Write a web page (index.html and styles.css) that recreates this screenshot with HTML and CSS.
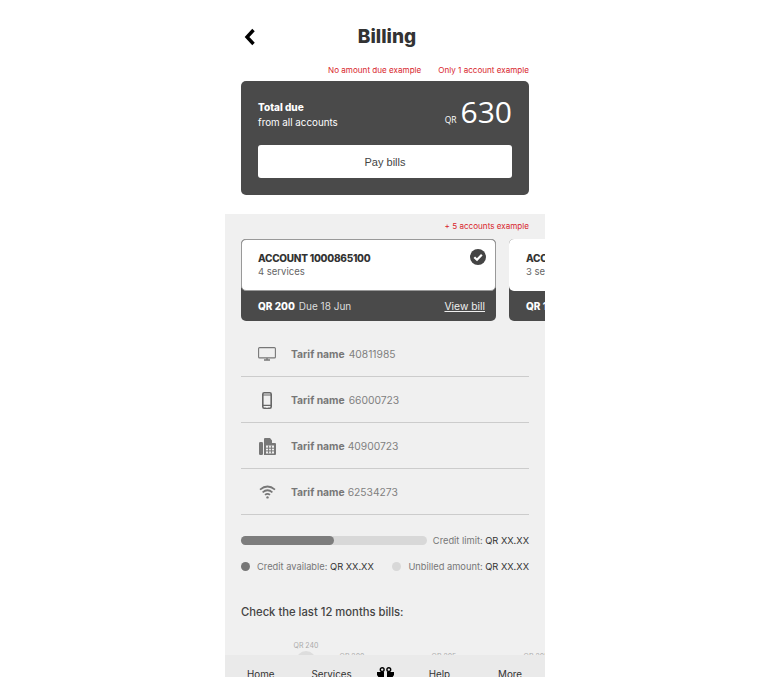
FILE: index.html
```html
<!DOCTYPE html>
<html lang="en">

<head>
    <meta charset="UTF-8">
    <meta name="viewport" content="width=device-width, initial-scale=1.0">
    <title>Billing</title>
    <link rel="stylesheet" href="styles.css">
</head>

<body>

    <div class="phone">
        <div class="top">
            <header class="title-row">
                <svg class="back" width="12" height="18" viewBox="0 0 12 18">
                    <path d="M9.5 2 L3 9 L9.5 16" fill="none" stroke="#000" stroke-width="3.4" />
                </svg>
                <h1>Billing</h1>
            </header>

            <div class="examples">
                <span>No amount due example</span>
                <span>Only 1 account example</span>
            </div>

            <section class="due-card">
                <div class="due-row">
                    <div class="due-text">
                        <strong>Total due</strong>
                        <span>from all accounts</span>
                    </div>
                    <div class="due-amount"><small>QR</small>630</div>
                </div>
                <button class="pay-btn">Pay bills</button>
            </section>
        </div>

        <div class="main">
            <div class="examples examples-single">
                <span>+ 5 accounts example</span>
            </div>

            <div class="accounts">
                <div class="account">
                    <div class="account-head selected">
                        <strong>ACCOUNT 1000865100</strong>
                        <span>4 services</span>
                        <svg class="check" width="16" height="16" viewBox="0 0 16 16">
                            <circle cx="8" cy="8" r="8" fill="#444" />
                            <path d="M4.3 8.2 L7 10.8 L11.8 5.8" fill="none" stroke="#fff" stroke-width="2.2" />
                        </svg>
                    </div>
                    <div class="account-foot">
                        <strong>QR 200</strong>
                        <span class="due-date">Due 18 Jun</span>
                        <a href="#">View bill</a>
                    </div>
                </div>
                <div class="account">
                    <div class="account-head">
                        <strong>ACCOUNT 1000865101</strong>
                        <span>3 services</span>
                    </div>
                    <div class="account-foot">
                        <strong>QR 100</strong>
                        <span class="due-date">Due 18 Jun</span>
                        <a href="#">View bill</a>
                    </div>
                </div>
            </div>

            <ul class="services">
                <li>
                    <span class="service-icon">
                        <svg width="18" height="14" viewBox="0 0 18 14">
                            <rect x="0.6" y="0.6" width="16.8" height="10.3" rx="1" fill="none" stroke="#777" stroke-width="1.1" />
                            <path d="M6 13 H12 M9 11 V13" stroke="#777" stroke-width="1.3" />
                        </svg>
                    </span>
                    <strong>Tarif name</strong><span class="number">40811985</span>
                </li>
                <li>
                    <span class="service-icon">
                        <svg width="10" height="17" viewBox="0 0 10 17">
                            <rect x="0.8" y="0.8" width="8.4" height="15.4" rx="1.4" fill="none" stroke="#666" stroke-width="1.6" />
                            <path d="M1 3 H9 M1 13.4 H9" stroke="#666" stroke-width="1.2" />
                            <circle cx="5" cy="15" r="0.8" fill="#fff" />
                        </svg>
                    </span>
                    <strong>Tarif name</strong><span class="number">66000723</span>
                </li>
                <li>
                    <span class="service-icon">
                        <svg width="17" height="17" viewBox="0 0 17 17">
                            <rect x="0" y="4" width="4" height="13" rx="1.2" fill="#777" />
                            <path d="M5 17 V1 Q5 0 6 0 H11 L13 2.4 V5 H16 Q17 5 17 6 V16 Q17 17 16 17 Z" fill="#777" />
                            <path d="M7 7.5 H15 V15.5 H7 Z" fill="#f0f0f0" />
                            <path d="M9.6 7.5 V15.5 M12.4 7.5 V15.5 M7 10.2 H15 M7 12.9 H15" stroke="#777" stroke-width="1" />
                        </svg>
                    </span>
                    <strong>Tarif name</strong><span class="number number-close">40900723</span>
                </li>
                <li>
                    <span class="service-icon">
                        <svg width="17" height="14" viewBox="0 0 17 14">
                            <path d="M1 4.6 Q8.5 -1.6 16 4.6 M3.6 7.3 Q8.5 3.2 13.4 7.3 M6 9.9 Q8.5 7.9 11 9.9" fill="none" stroke="#777" stroke-width="1.7" />
                            <circle cx="8.5" cy="12.4" r="1.2" fill="#777" />
                        </svg>
                    </span>
                    <strong>Tarif name</strong><span class="number number-close">62534273</span>
                </li>
            </ul>

            <div class="credit-row">
                <div class="credit-bar"><div class="credit-fill"></div></div>
                <div class="credit-limit">Credit limit: <b>QR XX.XX</b></div>
            </div>

            <div class="legend">
                <div class="legend-item"><i class="dot dot-dark"></i>Credit available: <b>QR XX.XX</b></div>
                <div class="legend-item"><i class="dot dot-light"></i>Unbilled amount: <b>QR XX.XX</b></div>
            </div>

            <h2>Check the last 12 months bills:</h2>

            <div class="chart">
                <div class="month month-tall"><span>QR 240</span><i></i></div>
                <div class="month month-low"><span>QR 200</span></div>
                <div class="month month-low"><span>QR 205</span></div>
                <div class="month month-low"><span>QR 205</span></div>
            </div>
        </div>

        <!-- Bottom tabs, cut off by the window -->
        <nav class="tabs">
            <span>Home</span>
            <span>Services</span>
            <svg class="gift" width="17" height="13" viewBox="0 0 17 13">
                <circle cx="5.2" cy="2.6" r="1.9" fill="none" stroke="#000" stroke-width="1.4" />
                <circle cx="11.8" cy="2.6" r="1.9" fill="none" stroke="#000" stroke-width="1.4" />
                <path d="M0 5 H7 V13 H3 Q1.500 10 0 8 Z M10 5 H17 V8 Q15.500 10 14 13 H10 Z" fill="#000" />
            </svg>
            <span>Help</span>
            <span>More</span>
        </nav>
    </div>

</body>

</html>
```

FILE: styles.css
```css
* {
    box-sizing: border-box;
}

html,
body {
    height: 100%;
}

body {
    margin: 0;
    background-color: #fff;
    font-family: Inter, "Liberation Sans", sans-serif;
    overflow: hidden;
}

.phone {
    position: relative;
    width: 320px;
    height: 677px;
    margin-left: 225px;
    overflow: hidden;
    background-color: #f0f0f0;
}

/* Top section */
.top {
    height: 214px;
    padding: 0 16px;
    background-color: #fff;
}

.title-row {
    display: flex;
    align-items: center;
    justify-content: center;
    position: relative;
    height: 73px;
    padding-bottom: 1px;
}

.back {
    position: absolute;
    left: 3px;
    top: 28px;
}

h1 {
    margin: 0 0 0 4px;
    font-size: 19px;
    font-weight: 800;
    color: #333;
}

.examples {
    display: flex;
    justify-content: flex-end;
    gap: 17px;
    height: 8px;
    font-size: 8.1px;
    line-height: 8px;
    margin-top: -7px;
    margin-bottom: 7px;
    color: #d8262c;
}

.due-card {
    height: 114px;
    padding: 17px 17px 0;
    background-color: #4a4a4a;
    border-radius: 5px;
    color: #fff;
}

.due-row {
    display: flex;
    justify-content: space-between;
    align-items: center;
    height: 32px;
}

.due-text {
    display: flex;
    flex-direction: column;
    gap: 2px;
    padding-top: 2px;
    font-size: 9.8px;
    line-height: 13px;
}

.due-text strong {
    font-size: 10px;
    font-weight: 800;
}

.due-amount {
    font-size: 30px;
    line-height: 32px;
    margin-top: 3px;
    font-family: "Open Sans", sans-serif;
}

.due-amount small {
    font-size: 8.500px;
    margin-right: 4px;
}

.pay-btn {
    display: block;
    width: 254px;
    height: 33px;
    margin: 15px 0 0;
    border: 0;
    border-radius: 3px;
    background-color: #fff;
    color: #444;
    font-family: "Liberation Sans", sans-serif;
    font-size: 11px;
}

/* Accounts */
.main {
    padding: 0 16px;
}

.examples-single {
    margin: 8px 0 9px;
}

.accounts {
    display: flex;
    gap: 13px;
    width: 600px;
}

.account {
    width: 255px;
    flex-shrink: 0;
    height: 82px;
    background-color: #4a4a4a;
    border-radius: 5px;
}

.account-head {
    position: relative;
    display: flex;
    flex-direction: column;
    height: 52px;
    padding: 12px 17px 0;
    background-color: #fff;
    border-radius: 5px;
    font-size: 9.500px;
    line-height: 14px;
    color: #666;
}

.account-head.selected {
    border: 1px solid #999;
    padding: 11px 16px 0;
}

.account-head strong {
    color: #333;
    font-size: 10px;
    letter-spacing: -0.25px;
    font-weight: 800;
    white-space: nowrap;
}

.check {
    position: absolute;
    right: 9px;
    top: 9px;
}

.account-foot {
    display: flex;
    align-items: center;
    height: 29px;
    padding: 0 11px 0 17px;
    font-size: 10px;
    color: #ddd;
}

.account-foot strong {
    color: #fff;
    font-weight: 800;
    white-space: nowrap;
}

.due-date {
    margin-left: 4px;
    white-space: nowrap;
}

.account-foot a {
    margin-left: auto;
    font-size: 10.300px;
    color: #eee;
    white-space: nowrap;
}

/* Services list */
.services {
    list-style: none;
    margin: 10px 0 0;
    padding: 0;
}

.services li {
    display: flex;
    align-items: center;
    height: 46px;
    padding-top: 1px;
    border-bottom: 1px solid #ccc;
    font-size: 10.300px;
    color: #808080;
    white-space: nowrap;
}

.service-icon {
    display: flex;
    align-items: center;
    justify-content: center;
    width: 18px;
    margin: 0 15px 0 17px;
}

.services strong {
    font-weight: 700;
    color: #777;
}

.number {
    margin-left: 4px;
}

.number-close {
    margin-left: 3px;
}

/* Credit */
.credit-row {
    display: flex;
    align-items: center;
    justify-content: space-between;
    margin-top: 15px;
    height: 20px;
}

.credit-bar {
    width: 186px;
    height: 9px;
    background-color: #d8d8d8;
    border-radius: 5px;
}

.credit-fill {
    width: 50%;
    height: 100%;
    background-color: #7d7d7d;
    border-radius: 5px;
}

.credit-limit,
.legend-item {
    font-size: 9.300px;
    color: #777;
    white-space: nowrap;
}

.credit-limit b,
.legend-item b {
    font-weight: 400;
    color: #333;
}

.legend {
    display: flex;
    justify-content: space-between;
    margin-top: 6px;
    height: 20px;
    align-items: center;
}

.legend-item {
    display: flex;
    align-items: center;
    white-space: pre;
}

.dot {
    width: 9px;
    height: 9px;
    margin-right: 7px;
    border-radius: 50%;
}

.dot-dark {
    background-color: #777;
}

.dot-light {
    background-color: #d8d8d8;
}

h2 {
    margin: 28px 0 0;
    font-size: 11.250px;
    line-height: 16px;
    font-weight: 500;
    color: #444;
}

/* Chart, mostly hidden under the tabs */
.chart {
    display: flex;
    margin-top: 21px;
    width: 320px;
    font-size: 7px;
    color: #aaa;
}

.month {
    display: flex;
    flex-direction: column;
    align-items: center;
    width: 46px;
    flex-shrink: 0;
}

.month-tall {
    margin-left: 44px;
    width: 42px;
}

.month-tall i {
    width: 20px;
    height: 20px;
    margin-top: 1px;
    background-color: #ddd;
    border-radius: 50%;
}

.month-low {
    padding-top: 11px;
    white-space: nowrap;
}

.month-low:nth-child(2) {
    margin-left: 2px;
}

.month-low:nth-child(3),
.month-low:nth-child(4) {
    margin-left: 46px;
}

/* Tabs */
.tabs {
    position: absolute;
    left: 0;
    right: 0;
    bottom: 0;
    display: flex;
    align-items: flex-start;
    height: 22px;
    padding: 13px 0 0 22px;
    overflow: hidden;
    background-color: #eaeaea;
    font-size: 9.800px;
    line-height: 14px;
    color: #333;
}

.tabs span:nth-child(2) {
    margin-left: 37px;
}

.gift {
    margin: -1px 0 0 25px;
}

.tabs span:nth-child(4) {
    margin-left: 35px;
}

.tabs span:nth-child(5) {
    margin-left: 48px;
}
```
